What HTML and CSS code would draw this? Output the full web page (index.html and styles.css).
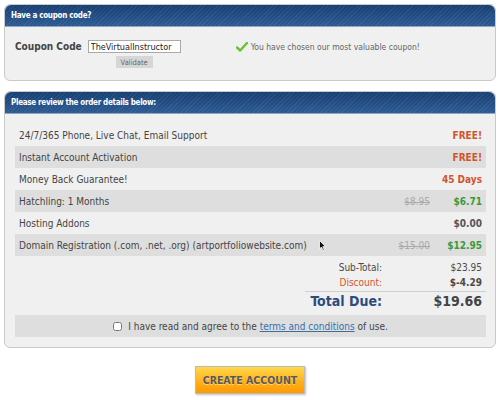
FILE: index.html
```html
<!DOCTYPE html>
<html lang="en">
<head>
    <meta charset="UTF-8">
    <title>Checkout</title>
    <link rel="stylesheet" href="styles.css">
</head>
<body>

    <!-- Coupon -->
    <div class="panel coupon-panel">
        <div class="panel-head">Have a coupon code?</div>
        <div class="coupon-body">
            <div class="coupon-form">
                <label for="coupon">Coupon Code</label>
                <div class="coupon-field">
                    <input type="text" id="coupon" value="TheVirtualInstructor">
                    <button class="validate">Validate</button>
                </div>
            </div>
            <div class="coupon-msg">
                <svg width="12" height="10" viewBox="0 0 12 10"><path d="M1 5.5 L4.2 8.5 L11 1" fill="none" stroke="#6cbf2c" stroke-width="2.4" stroke-linecap="round" stroke-linejoin="round"/></svg>
                You have chosen our most valuable coupon!
            </div>
        </div>
    </div>

    <!-- Order details -->
    <div class="panel order-panel">
        <div class="panel-head">Please review the order details below:</div>
        <div class="order-body">
            <div class="row">
                <span class="item">24/7/365 Phone, Live Chat, Email Support</span>
                <span class="price free">FREE!</span>
            </div>
            <div class="row alt">
                <span class="item">Instant Account Activation</span>
                <span class="price free">FREE!</span>
            </div>
            <div class="row">
                <span class="item">Money Back Guarantee!</span>
                <span class="price free">45 Days</span>
            </div>
            <div class="row alt">
                <span class="item">Hatchling: 1 Months</span>
                <span class="old">$8.95</span>
                <span class="price sale">$6.71</span>
            </div>
            <div class="row">
                <span class="item">Hosting Addons</span>
                <span class="price">$0.00</span>
            </div>
            <div class="row alt">
                <span class="item">Domain Registration (.com, .net, .org) (artportfoliowebsite.com)</span>
                <svg class="cursor" width="7" height="11" viewBox="0 0 7 11"><path d="M0.5 0.5 L0.5 9 L2.5 7 L4 10.5 L5.3 10 L3.9 6.6 L6.5 6.6 Z" fill="#111" stroke="#fff" stroke-width="0.8"/></svg>
                <span class="old">$15.00</span>
                <span class="price sale">$12.95</span>
            </div>

            <div class="totals">
                <span class="t-label">Sub-Total:</span>
                <span class="t-value">$23.95</span>
                <span class="t-label discount">Discount:</span>
                <span class="t-value sale">$-4.29</span>
                <span class="t-label total">Total Due:</span>
                <span class="t-value total">$19.66</span>
            </div>

            <div class="terms">
                <input type="checkbox" id="agree">
                <label for="agree">I have read and agree to the <a href="#">terms and conditions</a> of use.</label>
            </div>
        </div>
    </div>

    <div class="actions">
        <button class="create">CREATE ACCOUNT</button>
    </div>

</body>
</html>
```

FILE: styles.css
```css
body {
    margin: 0;
    padding: 4px;
    background-color: #fff;
    font-family: "DejaVu Sans Condensed", "DejaVu Sans", sans-serif;
    font-size: 10px;
    color: #444;
}
.panel {
    background-color: #f0f0f0;
    border: 1px solid #c9c9c9;
    border-radius: 6px;
}
.panel-head {
    height: 21px;
    line-height: 21px;
    padding-left: 6px;
    border-radius: 6px 6px 0 0;
    color: #fff;
    font-size: 8px;
    font-weight: bold;
    letter-spacing: -0.3px;
    background:
        repeating-linear-gradient(-45deg, rgba(255,255,255,0.06) 0 1px, transparent 1px 3px),
        linear-gradient(#173f73, #2d5b92);
    border-bottom: 1px solid #8ea6c4;
}

/* coupon */
.coupon-body {
    display: flex;
    align-items: flex-start;
    height: 53px;
    padding: 13px 0 0 10px;
    box-sizing: border-box;
}
.coupon-form {
    display: flex;
    align-items: flex-start;
    gap: 6px;
}
.coupon-form label {
    font-weight: bold;
    font-size: 10px;
    color: #444;
    padding-top: 1px;
}
.coupon-field {
    display: flex;
    flex-direction: column;
    align-items: center;
    gap: 3px;
}
.coupon-field input {
    width: 93px;
    height: 13px;
    box-sizing: border-box;
    border: 1px solid #aaa;
    padding: 0 2px;
    font-family: "DejaVu Sans Condensed", sans-serif;
    font-size: 9px;
    color: #222;
    background: #fff;
}
.validate {
    width: 37px;
    height: 12px;
    padding: 0;
    border: none;
    background-color: #d6d6d6;
    color: #666;
    font-family: "DejaVu Sans Condensed", sans-serif;
    font-size: 7.5px;
}
.coupon-msg {
    margin-left: 55px;
    padding-top: 2px;
    display: flex;
    align-items: center;
    gap: 3px;
    font-size: 8.5px;
    color: #666;
}

/* order */
.order-panel {
    margin-top: 10px;
}
.order-body {
    padding: 10px 9px 10px 10px;
}
.row {
    display: flex;
    align-items: center;
    height: 22px;
    padding: 0 4px;
}
.row.alt {
    background-color: #dedede;
}
.item {
    flex: 1;
}
.cursor {
    margin-right: 64px;
}
.old {
    width: 40px;
    text-align: right;
    margin-right: 12px;
    color: #aaa;
    text-decoration: line-through;
}
.price {
    width: 40px;
    text-align: right;
    font-weight: bold;
    color: #555;
}
.price.free {
    color: #d0552a;
    width: 60px;
}
.sale {
    color: #3a9a3a;
    font-weight: bold;
}

.totals {
    display: grid;
    grid-template-columns: minmax(0, 1fr) 104px;
    margin: 4px 0 0 290px;
    line-height: 15px;
}
.t-label {
    text-align: right;
    color: #4a4a4a;
    white-space: nowrap;
}
.t-value {
    text-align: right;
    color: #4a4a4a;
    padding-right: 4px;
}
.t-label.discount {
    color: #d0552a;
}
.t-label.total,
.t-value.total {
    border-top: 1px solid #cfcfcf;
    margin-top: 1px;
    padding-top: 1px;
    font-size: 14px;
    line-height: 17px;
    font-weight: bold;
}
.t-label.total {
    color: #2c4c7e;
}
.t-value.total {
    color: #444;
}

.terms {
    display: flex;
    justify-content: center;
    align-items: center;
    gap: 4px;
    height: 22px;
    margin-top: 5px;
    background-color: #dedede;
}
.terms input {
    width: 9px;
    height: 9px;
    margin: 0 2px 0 0;
}
.terms a {
    color: #3a6fa6;
}

.actions {
    display: flex;
    justify-content: center;
    margin-top: 18px;
}
.create {
    width: 110px;
    height: 28px;
    border: 1px solid #bbb;
    box-shadow: 1px 1px 2px rgba(0,0,0,0.25);
    background: linear-gradient(#ffd84a, #ffae1a 60%, #ff9a00);
    color: #5a5a5a;
    font-family: "DejaVu Sans Condensed", sans-serif;
    font-weight: bold;
    font-size: 10.5px;
    text-shadow: 0 1px 0 rgba(255,255,255,0.5);
}
```
